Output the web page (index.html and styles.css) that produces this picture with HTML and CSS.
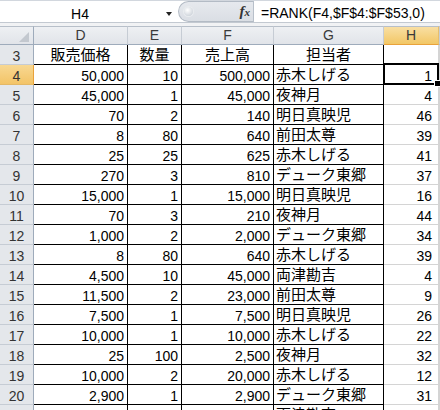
FILE: index.html
```html
<!DOCTYPE html>
<html lang="ja">
<head>
<meta charset="utf-8">
<title>RANK</title>
<link rel="stylesheet" href="styles.css">
</head>
<body>
<div class="app">
  <div class="fbar">
    <div class="namebox">
      <span class="name">H4</span>
      <svg class="dd" width="6" height="4" viewBox="0 0 6 4"><path d="M0 0H6L3 4Z" fill="#222"/></svg>
    </div>
    <div class="fbtns">
      <span class="dot"></span>
      <span class="fx"><i>f</i><i class="fxx">x</i></span>
    </div>
    <div class="formula">=RANK(F4,$F$4:$F$53,0)</div>
  </div>
  <div class="sep"></div>
  <div class="grid">
    <div class="ch corner"><svg width="10" height="10" viewBox="0 0 10 10"><path d="M10 0V10H0Z" fill="#c3c8cf"/></svg></div>
    <div class="ch">D</div><div class="ch">E</div><div class="ch">F</div><div class="ch">G</div><div class="ch selh">H</div><div class="ch"></div>

    <div class="rh">3</div><div class="c t hd">販売価格</div><div class="c t hd">数量</div><div class="c t hd">売上高</div><div class="c t hd">担当者</div><div class="g"></div><div class="g"></div>

    <div class="rh selr">4</div><div class="c n">50,000</div><div class="c n">10</div><div class="c n">500,000</div><div class="c t">赤木しげる</div><div class="g n h active">1<div class="selbox"></div><div class="handle"></div></div><div class="g"></div>
    <div class="rh">5</div><div class="c n">45,000</div><div class="c n">1</div><div class="c n">45,000</div><div class="c t">夜神月</div><div class="g n h">4</div><div class="g"></div>
    <div class="rh">6</div><div class="c n">70</div><div class="c n">2</div><div class="c n">140</div><div class="c t">明日真映児</div><div class="g n h">46</div><div class="g"></div>
    <div class="rh">7</div><div class="c n">8</div><div class="c n">80</div><div class="c n">640</div><div class="c t">前田太尊</div><div class="g n h">39</div><div class="g"></div>
    <div class="rh">8</div><div class="c n">25</div><div class="c n">25</div><div class="c n">625</div><div class="c t">赤木しげる</div><div class="g n h">41</div><div class="g"></div>
    <div class="rh">9</div><div class="c n">270</div><div class="c n">3</div><div class="c n">810</div><div class="c t">デューク東郷</div><div class="g n h">37</div><div class="g"></div>
    <div class="rh">10</div><div class="c n">15,000</div><div class="c n">1</div><div class="c n">15,000</div><div class="c t">明日真映児</div><div class="g n h">16</div><div class="g"></div>
    <div class="rh">11</div><div class="c n">70</div><div class="c n">3</div><div class="c n">210</div><div class="c t">夜神月</div><div class="g n h">44</div><div class="g"></div>
    <div class="rh">12</div><div class="c n">1,000</div><div class="c n">2</div><div class="c n">2,000</div><div class="c t">デューク東郷</div><div class="g n h">34</div><div class="g"></div>
    <div class="rh">13</div><div class="c n">8</div><div class="c n">80</div><div class="c n">640</div><div class="c t">赤木しげる</div><div class="g n h">39</div><div class="g"></div>
    <div class="rh">14</div><div class="c n">4,500</div><div class="c n">10</div><div class="c n">45,000</div><div class="c t">両津勘吉</div><div class="g n h">4</div><div class="g"></div>
    <div class="rh">15</div><div class="c n">11,500</div><div class="c n">2</div><div class="c n">23,000</div><div class="c t">前田太尊</div><div class="g n h">9</div><div class="g"></div>
    <div class="rh">16</div><div class="c n">7,500</div><div class="c n">1</div><div class="c n">7,500</div><div class="c t">明日真映児</div><div class="g n h">26</div><div class="g"></div>
    <div class="rh">17</div><div class="c n">10,000</div><div class="c n">1</div><div class="c n">10,000</div><div class="c t">赤木しげる</div><div class="g n h">22</div><div class="g"></div>
    <div class="rh">18</div><div class="c n">25</div><div class="c n">100</div><div class="c n">2,500</div><div class="c t">夜神月</div><div class="g n h">32</div><div class="g"></div>
    <div class="rh">19</div><div class="c n">10,000</div><div class="c n">2</div><div class="c n">20,000</div><div class="c t">赤木しげる</div><div class="g n h">12</div><div class="g"></div>
    <div class="rh">20</div><div class="c n">2,900</div><div class="c n">1</div><div class="c n">2,900</div><div class="c t">デューク東郷</div><div class="g n h">31</div><div class="g"></div>
    <div class="rh"></div><div class="c"></div><div class="c"></div><div class="c"></div><div class="c t">両津勘吉</div><div class="g"></div><div class="g"></div>
  </div>
</div>
</body>
</html>
```
FILE: styles.css
```css
html, body {
  margin: 0;
  padding: 0;
  background: #fff;
}
body {
  width: 440px;
  height: 410px;
  overflow: hidden;
  font-family: "Liberation Sans", Arial, sans-serif;
  color: #000;
}
.app {
  width: 440px;
}

/* formula bar */
.fbar {
  display: flex;
  height: 22px;
  box-sizing: border-box;
  border-top: 1px solid #d2d7de;
}
.namebox {
  width: 178px;
  display: flex;
  background: #fff;
}
.name {
  width: 160px;
  text-align: center;
  font-size: 14px;
  line-height: 16px;
  padding-top: 5px;
}
.dd {
  margin-left: 6px;
  margin-top: 11px;
}
.fbtns {
  width: 75px;
  box-sizing: border-box;
  display: flex;
  align-items: center;
  justify-content: space-between;
  background: linear-gradient(#e6e9ee, #dadee4);
  border: 1px solid #b3bbc5;
  border-right: none;
  border-radius: 11px 0 0 11px;
}
.dot {
  width: 9px;
  height: 9px;
  margin-left: 5px;
  border-radius: 50%;
  background: radial-gradient(circle at 40% 35%, #ffffff, #cdd3da 80%);
  box-shadow: 0 0 0 1px #e9ecef;
}
.fx {
  margin-right: 3px;
  font-family: "Liberation Serif", serif;
  font-weight: bold;
  font-size: 15px;
  line-height: 16px;
  color: #333;
}
.fx i {
  font-style: italic;
}
.fxx {
  font-size: 11px;
}
.formula {
  flex: 1;
  border-left: 1px solid #b8c0ca;
  padding-left: 7px;
  font-size: 14px;
  line-height: 16px;
  padding-top: 4px;
  white-space: nowrap;
  overflow: hidden;
  background: #fff;
}
.sep {
  height: 4px;
  box-sizing: border-box;
  border-top: 1px solid #c3c9d1;
  background: #f1f2f4;
}

/* sheet grid */
.grid {
  display: grid;
  grid-template-columns: 34px 94px 54px 92px 110px 55px 1fr;
  grid-template-rows: 19px;
  grid-auto-rows: 20px;
}
.grid > div {
  box-sizing: border-box;
  white-space: nowrap;
}
.ch {
  background: linear-gradient(#eef0f3, #e1e4e9);
  border-top: 1px solid #b7bfc9;
  border-bottom: 1px solid #9eabbb;
  border-right: 1px solid #c6ccd4;
  text-align: center;
  font-size: 14px;
  line-height: 16px;
  padding-top: 0;
  color: #3a3a3a;
}
.corner {
  display: flex;
  align-items: flex-end;
  justify-content: flex-end;
  padding: 0 4px 2px 0;
  border-right-color: #9eabbb;
}
.selh {
  background: linear-gradient(#f9dfa3, #f2c766);
  border-bottom-color: #e9a23b;
  border-right-color: #e7bf6e;
}
.rh {
  background: #e4e7eb;
  border-right: 1px solid #9eabbb;
  border-bottom: 1px solid #c6ccd4;
  text-align: center;
  font-size: 14px;
  line-height: 16px;
  padding-top: 3px;
  color: #333;
}
.selr {
  background: linear-gradient(#f8d892, #f3c467);
  border-bottom-color: #e4b866;
  border-right-color: #e9a23b;
}
.c {
  border-right: 1px solid #000;
  border-bottom: 1px solid #000;
}
.g {
  border-right: 1px solid #d4d4d4;
  border-bottom: 1px solid #d4d4d4;
}
.n {
  text-align: right;
  font-size: 14px;
  line-height: 16px;
  padding: 3px 3px 0 0;
}
.h {
  padding-right: 6px;
}
.t {
  font-family: "Noto Sans CJK JP", "Liberation Sans", sans-serif;
  font-size: 15px;
  line-height: 18px;
  padding-left: 2px;
}
.hd {
  text-align: center;
  padding-left: 0;
}
.grid > .active {
  position: relative;
}
.selbox {
  position: absolute;
  z-index: 2;
  top: -2px;
  left: -1px;
  width: 56px;
  height: 22px;
  box-sizing: border-box;
  border: 2px solid #000;
}
.handle {
  position: absolute;
  z-index: 3;
  right: -3px;
  bottom: -3px;
  width: 5px;
  height: 5px;
  background: #000;
  border: 1px solid #fff;
}
```
